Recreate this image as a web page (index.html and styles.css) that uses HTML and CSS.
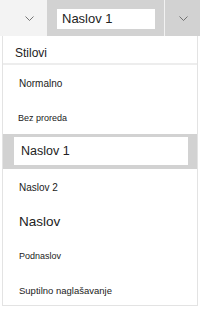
FILE: index.html
```html
<!DOCTYPE html>
<html>
<head>
<meta charset="utf-8">
<link rel="stylesheet" href="styles.css">
</head>
<body>
<div class="toolbar">
  <div class="btn-left">
    <svg class="chev" width="9" height="5" viewBox="0 0 9 5"><path d="M0.5 0.5 L4.5 4.5 L8.5 0.5" fill="none" stroke="#666" stroke-width="0.9"/></svg>
  </div>
  <div class="input-wrap">
    <div class="input">Naslov 1</div>
  </div>
  <div class="divider"></div>
  <div class="btn-right">
    <svg class="chev" width="9" height="5" viewBox="0 0 9 5"><path d="M0.5 0.5 L4.5 4.5 L8.5 0.5" fill="none" stroke="#666" stroke-width="0.9"/></svg>
  </div>
</div>
<div class="panel">
  <div class="heading">Stilovi</div>
  <div class="list">
    <div class="item s-normal">Normalno</div>
    <div class="item s-bez">Bez proreda</div>
    <div class="item selected"><div class="sel-box s-h1">Naslov 1</div></div>
    <div class="item s-h2">Naslov 2</div>
    <div class="item s-title">Naslov</div>
    <div class="item s-sub">Podnaslov</div>
    <div class="item s-subtle">Suptilno naglašavanje</div>
  </div>
</div>
</body>
</html>
```
FILE: styles.css
```css
html, body {
  margin: 0;
  padding: 0;
  background: #ffffff;
  font-family: "Liberation Sans", Arial, sans-serif;
  color: #222;
}
.toolbar {
  display: flex;
  height: 36px;
  background: #d2d2d2;
}
.btn-left {
  width: 47px;
  background: #f3f3f3;
  display: flex;
  align-items: center;
  padding-left: 25px;
  box-sizing: border-box;
}
.chev { display: block; }
.input-wrap {
  width: 117px;
  padding: 9px 9px 0 10px;
  box-sizing: border-box;
}
.input {
  background: #fff;
  height: 20px;
  width: 98px;
  box-sizing: border-box;
  padding-left: 5px;
  font-size: 13px;
  line-height: 20px;
  color: #222;
}
.divider {
  width: 1px;
  background: #f2f2f2;
}
.btn-right {
  flex: 1;
  display: flex;
  align-items: center;
  justify-content: center;
  padding-left: 1px;
}
.panel {
  margin: 0 2px 0 2px;
  width: 196px;
  height: 270px;
  box-sizing: border-box;
  border: 1px solid #e3e3e3;
  border-top: none;
  overflow: hidden;
}
.heading {
  height: 29px;
  box-sizing: border-box;
  padding-left: 12px;
  font-size: 12px;
  line-height: 34px;
  border-bottom: 2px solid #ededed;
}
.item {
  height: 34.5px;
  display: flex;
  align-items: center;
  padding-left: 16px;
  box-sizing: border-box;
  color: #222;
}
.s-normal { font-size: 10px; padding-top: 3px; }
.s-bez { font-size: 9px; padding-left: 15px; padding-top: 2px; }
.selected {
  background: #d2d2d2;
  padding: 3px 9px 4px 11px;
  align-items: stretch;
}
.sel-box {
  background: #fff;
  flex: 1;
  display: flex;
  align-items: center;
  padding-left: 7px;
  font-size: 12.5px;
}
.s-h2 { font-size: 10px; padding-top: 3px; }
.s-title { font-size: 13.5px; padding-top: 3px; }
.s-sub { font-size: 9px; padding-top: 3px; }
.s-subtle { font-size: 9.5px; padding-top: 2px; }
```
